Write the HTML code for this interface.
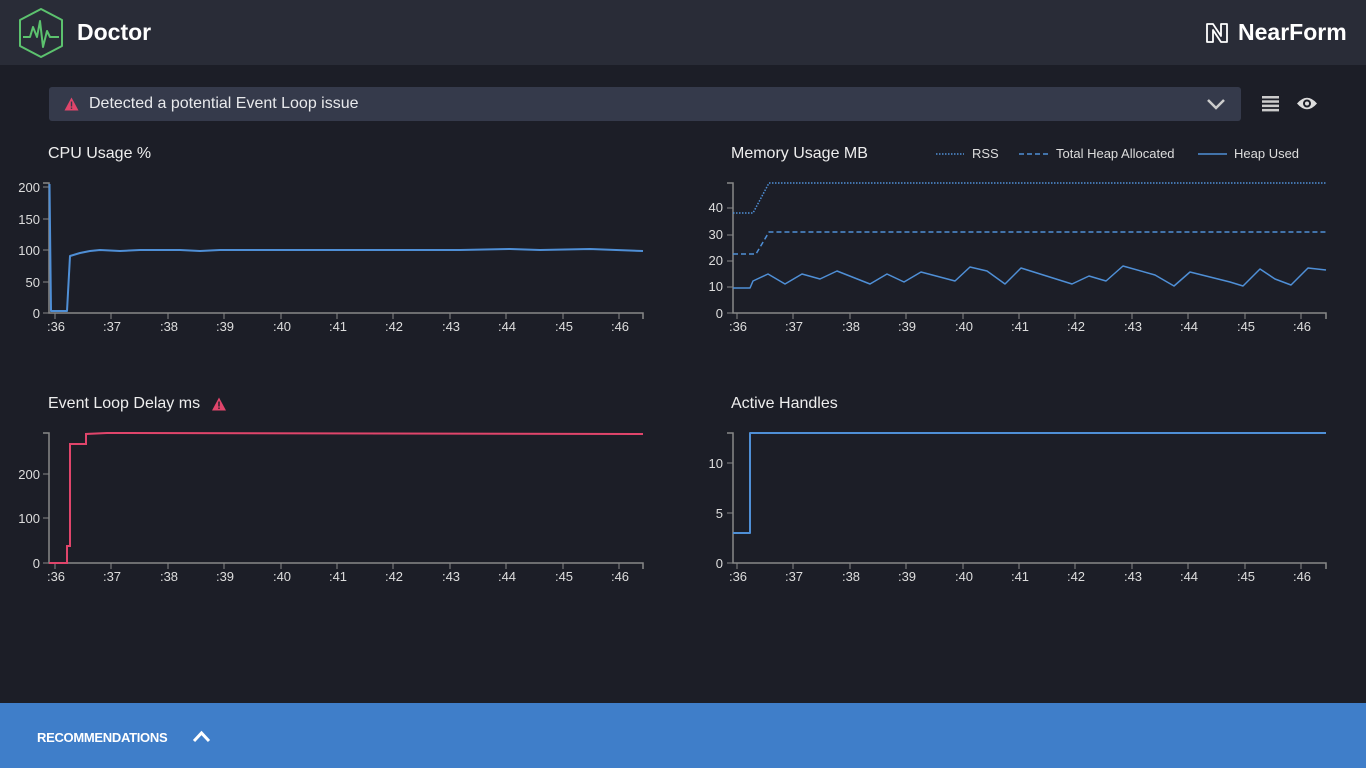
<!DOCTYPE html>
<html><head><meta charset="utf-8"><style>
*{margin:0;padding:0;box-sizing:border-box}
body{width:1366px;height:768px;background:#1c1e27;font-family:"Liberation Sans",sans-serif;color:#fff;position:relative;overflow:hidden}
.hdr{position:absolute;left:0;top:0;width:1366px;height:65px;background:#292c37}
.alert{position:absolute;left:49px;top:87px;width:1192px;height:34px;background:#353a4b;border-radius:3px}
.alert span{position:absolute;left:40px;top:8px;font-size:16px;color:#e8e9ec}
.t{position:absolute;font-size:16px;color:#eee}
.foot{position:absolute;left:0;top:703px;width:1366px;height:65px;background:#3f7ec9}
</style></head><body>
<div class="hdr"></div>
<svg style="position:absolute;left:16px;top:7px" width="50" height="52" viewBox="0 0 50 52">
<path d="M25 2 L46 13 L46 39 L25 50 L4 39 L4 13 Z" fill="none" stroke="#5cc26e" stroke-width="2" stroke-linejoin="round"/>
<path d="M7 30 L14 30 L17 20 L21 30 L24 14 L27 40 L31 24 L34 30 L43 30" fill="none" stroke="#5cc26e" stroke-width="2" stroke-linejoin="round"/>
</svg>
<div style="position:absolute;left:77px;top:19px;font-size:23px;font-weight:bold">Doctor</div>
<svg style="position:absolute;left:1205px;top:22px" width="24" height="22" viewBox="0 0 24 22">
<path d="M2 2 H8 L16 14 V2 H22 V20 H16 L8 8 V20 H2 Z" fill="none" stroke="#fff" stroke-width="1.8" stroke-linejoin="round"/>
</svg>
<div style="position:absolute;left:1238px;top:19px;font-size:23px;font-weight:bold;letter-spacing:0px">NearForm</div>

<div class="alert"><span>Detected a potential Event Loop issue</span>
<svg style="position:absolute;left:15px;top:10px" width="15" height="14" viewBox="0 0 15 14"><path d="M7.5 0.5 L14.5 13.5 H0.5 Z" fill="#e0456b"/><rect x="6.8" y="4.5" width="1.4" height="5" fill="#353a4b"/><rect x="6.8" y="10.5" width="1.4" height="1.4" fill="#353a4b"/></svg>
<svg style="position:absolute;left:1157px;top:11px" width="20" height="13" viewBox="0 0 20 13"><path d="M2 2 L10 10 L18 2" fill="none" stroke="#ccc" stroke-width="2.5"/></svg>
</div>
<svg style="position:absolute;left:1262px;top:96px" width="18" height="16"><g fill="#ccc"><rect y="0" width="17" height="2.5"/><rect y="4.3" width="17" height="2.5"/><rect y="8.6" width="17" height="2.5"/><rect y="12.9" width="17" height="2.5"/></g></svg>
<svg style="position:absolute;left:1296px;top:95px" width="22" height="17" viewBox="0 0 22 17"><path d="M1 8.5 Q11 -3 21 8.5 Q11 20 1 8.5 Z" fill="#ddd"/><circle cx="11" cy="8.5" r="4" fill="#1c1e27"/><circle cx="11" cy="8.5" r="2" fill="#ddd"/></svg>

<div class="t" style="left:48px;top:145px">CPU Usage %</div>
<div class="t" style="left:731px;top:145px">Memory Usage MB</div>
<div class="t" style="left:48px;top:395px">Event Loop Delay ms</div>
<svg style="position:absolute;left:211px;top:397px" width="16" height="14" viewBox="0 0 15 14"><path d="M7.5 0.5 L14.5 13.5 H0.5 Z" fill="#e0456b"/><rect x="6.8" y="4.5" width="1.4" height="5" fill="#1c1e27"/><rect x="6.8" y="10.5" width="1.4" height="1.4" fill="#1c1e27"/></svg>
<div class="t" style="left:731px;top:395px">Active Handles</div>

<svg style="position:absolute;left:0;top:0" width="1366" height="700" font-family="Liberation Sans, sans-serif" font-size="13" fill="#ddd">
<line x1="936" y1="154" x2="964" y2="154" stroke="#4f8fd6" stroke-width="1.5" stroke-dasharray="1.5 1.5"/>
<text x="972" y="158">RSS</text>
<line x1="1019" y1="154" x2="1048" y2="154" stroke="#4f8fd6" stroke-width="1.5" stroke-dasharray="5 3"/>
<text x="1056" y="158">Total Heap Allocated</text>
<line x1="1198" y1="154" x2="1227" y2="154" stroke="#4f8fd6" stroke-width="1.5"/>
<text x="1234" y="158">Heap Used</text>

<g stroke="#888" stroke-width="1.5" fill="none">
<path d="M43 183 H49 V313 H643 V319"/>
<path d="M727 183 H733 V313 H1326 V319"/>
<path d="M43 433 H49 V563 H643 V569"/>
<path d="M727 433 H733 V563 H1326 V569"/>
</g>
<g stroke="#888" stroke-width="1">
<path d="M43 187H49M43 219H49M43 250H49M43 282H49M43 313H49"/>
<path d="M727 287H733M727 261H733M727 235H733M727 208H733M727 313H733"/>
<path d="M43 563H49M43 518H49M43 474H49"/>
<path d="M727 563H733M727 513H733M727 463H733"/>
<path d="M55 313V319M111 313V319M168 313V319M224 313V319M281 313V319M337 313V319M393 313V319M450 313V319M506 313V319M563 313V319M619 313V319"/>
<path d="M55 563V569M111 563V569M168 563V569M224 563V569M281 563V569M337 563V569M393 563V569M450 563V569M506 563V569M563 563V569M619 563V569"/>
<path d="M737 313V319M793 313V319M850 313V319M906 313V319M963 313V319M1019 313V319M1075 313V319M1132 313V319M1188 313V319M1245 313V319M1301 313V319"/>
<path d="M737 563V569M793 563V569M850 563V569M906 563V569M963 563V569M1019 563V569M1075 563V569M1132 563V569M1188 563V569M1245 563V569M1301 563V569"/>
</g>
<g text-anchor="end">
<text x="40" y="192">200</text><text x="40" y="224">150</text><text x="40" y="255">100</text><text x="40" y="287">50</text><text x="40" y="318">0</text>
<text x="723" y="212">40</text><text x="723" y="239">30</text><text x="723" y="265">20</text><text x="723" y="291">10</text><text x="723" y="318">0</text>
<text x="40" y="479">200</text><text x="40" y="523">100</text><text x="40" y="568">0</text>
<text x="723" y="468">10</text><text x="723" y="518">5</text><text x="723" y="568">0</text>
</g>
<g text-anchor="middle">
<text x="56" y="331">:36</text><text x="112" y="331">:37</text><text x="169" y="331">:38</text><text x="225" y="331">:39</text><text x="282" y="331">:40</text><text x="338" y="331">:41</text><text x="394" y="331">:42</text><text x="451" y="331">:43</text><text x="507" y="331">:44</text><text x="564" y="331">:45</text><text x="620" y="331">:46</text>
<text x="56" y="581">:36</text><text x="112" y="581">:37</text><text x="169" y="581">:38</text><text x="225" y="581">:39</text><text x="282" y="581">:40</text><text x="338" y="581">:41</text><text x="394" y="581">:42</text><text x="451" y="581">:43</text><text x="507" y="581">:44</text><text x="564" y="581">:45</text><text x="620" y="581">:46</text>
<text x="738" y="331">:36</text><text x="794" y="331">:37</text><text x="851" y="331">:38</text><text x="907" y="331">:39</text><text x="964" y="331">:40</text><text x="1020" y="331">:41</text><text x="1076" y="331">:42</text><text x="1133" y="331">:43</text><text x="1189" y="331">:44</text><text x="1246" y="331">:45</text><text x="1302" y="331">:46</text>
<text x="738" y="581">:36</text><text x="794" y="581">:37</text><text x="851" y="581">:38</text><text x="907" y="581">:39</text><text x="964" y="581">:40</text><text x="1020" y="581">:41</text><text x="1076" y="581">:42</text><text x="1133" y="581">:43</text><text x="1189" y="581">:44</text><text x="1246" y="581">:45</text><text x="1302" y="581">:46</text>
</g>
<g fill="none" stroke="#4f8fd6" stroke-width="2" stroke-linejoin="round">
<path d="M49.5 184 L51 311 L67 311 L70 256 L80 253 L90 251 L100 250 L120 251 L140 250 L180 250 L200 251 L220 250 L400 250 L460 250 L510 249 L540 250 L590 249 L643 251"/>
<path stroke-width="1.5" d="M733 288 L750 288 L753 281 L768 274 L785 284 L802 274 L820 279 L837 271 L870 284 L887 274 L904 282 L921 272 L955 281 L970 267 L987 271 L1005 284 L1021 268 L1072 284 L1089 276 L1106 281 L1123 266 L1155 275 L1174 286 L1190 272 L1230 282 L1243 286 L1260 269 L1275 279 L1291 285 L1308 268 L1326 270"/>
<path stroke-width="1.5" stroke-dasharray="5 3" d="M733 254 L756 254 L769 232 L1326 232"/>
<path stroke-width="1.5" stroke-dasharray="1.5 1.5" d="M733 213 L753 213 L769 183 L1326 183"/>
<path d="M733 533 L750 533 L750 433 L1326 433"/>
</g>
<path fill="none" stroke="#e0456b" stroke-width="2" d="M49 563 L67 563 L67 546 L70 546 L70 444 L86 444 L86 434 L107 433 L643 434"/>
</svg>

<div class="foot"></div>
<div style="position:absolute;left:37px;top:730px;font-size:13px;font-weight:bold;letter-spacing:-0.3px">RECOMMENDATIONS</div>
<svg style="position:absolute;left:192px;top:730px" width="19" height="13" viewBox="0 0 19 13"><path d="M2 11 L9.5 3 L17 11" fill="none" stroke="#fff" stroke-width="3"/></svg>
</body></html>
